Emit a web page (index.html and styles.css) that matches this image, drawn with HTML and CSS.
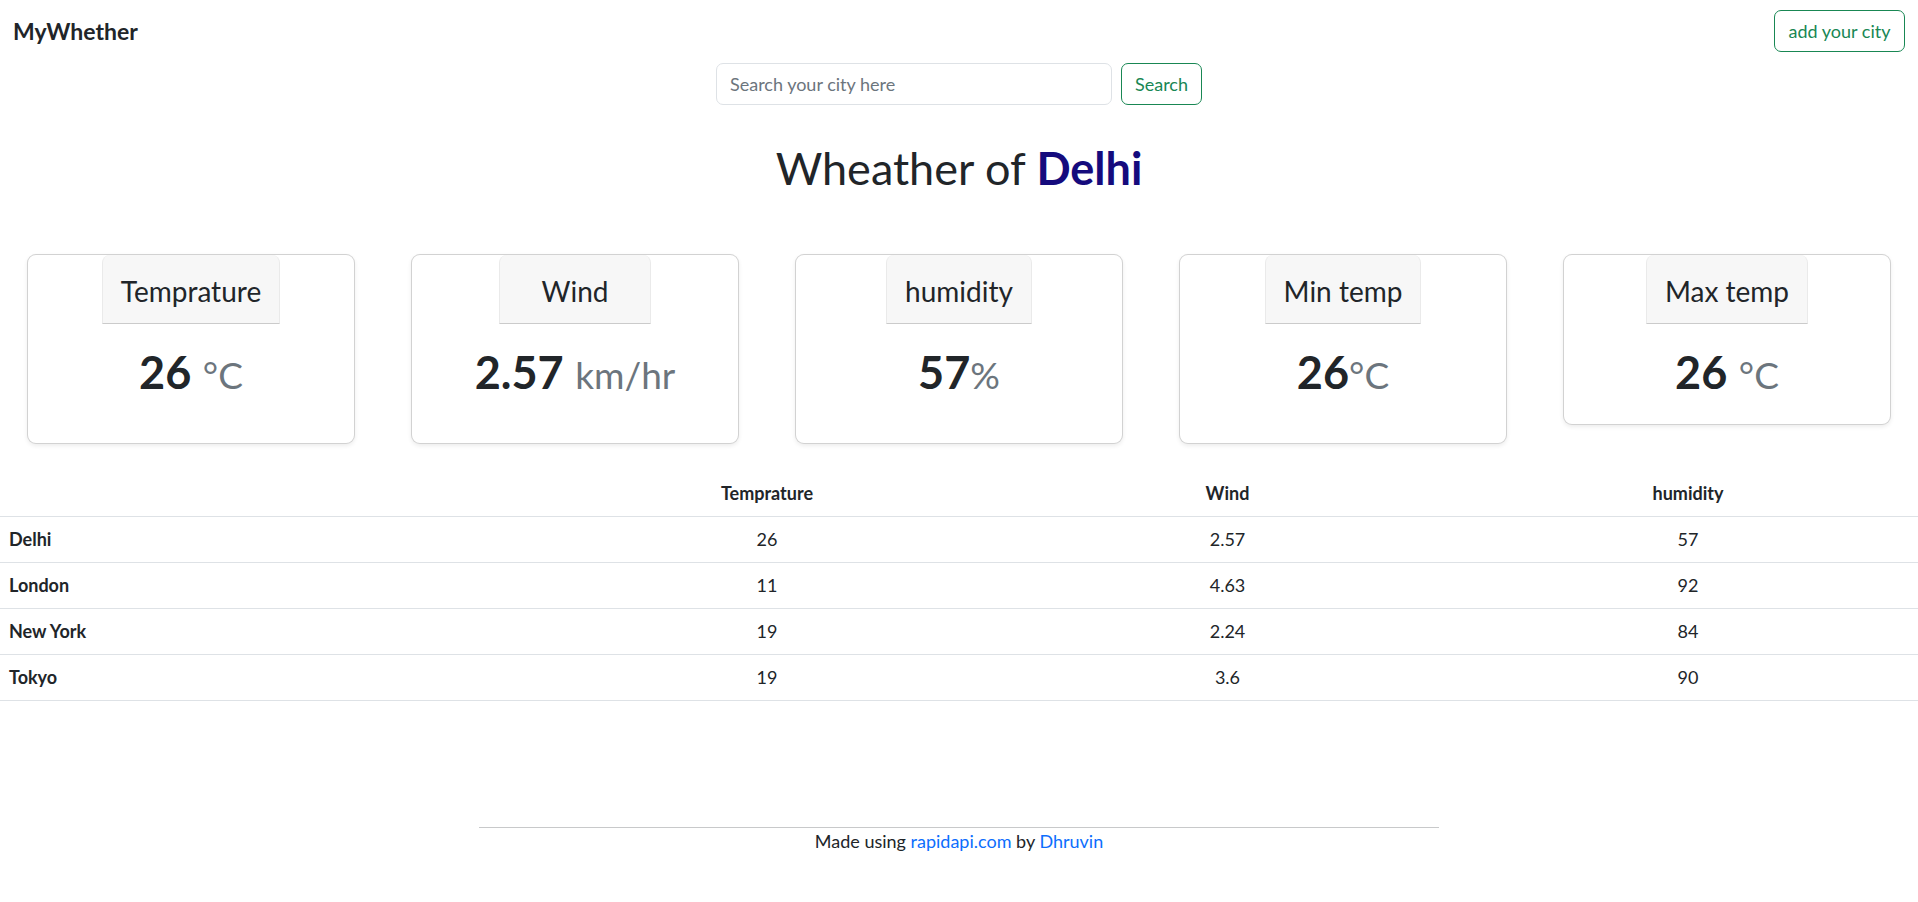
FILE: index.html
```html
<!DOCTYPE html>
<html lang="en">
<head>
<meta charset="utf-8">
<title>MyWhether</title>
<link rel="stylesheet" href="styles.css">
</head>
<body>
<nav class="navbar">
  <a class="brand" href="#">MyWhether</a>
  <button class="btn btn-green" type="button">add your city</button>
</nav>

<form class="search" onsubmit="return false">
  <input class="search-input" type="search" placeholder="Search your city here">
  <button class="btn btn-green" type="submit">Search</button>
</form>

<h1 class="title">Wheather of <span class="city">Delhi</span></h1>

<div class="cards">
  <div class="card card-tall">
    <div class="card-header">Temprature</div>
    <div class="value"><b>26</b> <span class="unit">°C</span></div>
  </div>
  <div class="card card-tall">
    <div class="card-header card-header-wide">Wind</div>
    <div class="value"><b>2.57</b> <span class="unit">km/hr</span></div>
  </div>
  <div class="card card-tall">
    <div class="card-header">humidity</div>
    <div class="value"><b>57</b><span class="unit">%</span></div>
  </div>
  <div class="card card-tall">
    <div class="card-header">Min temp</div>
    <div class="value"><b>26</b><span class="unit">°C</span></div>
  </div>
  <div class="card">
    <div class="card-header">Max temp</div>
    <div class="value"><b>26</b> <span class="unit">°C</span></div>
  </div>
</div>

<table class="table">
  <colgroup>
    <col class="col-city"><col class="col-a"><col class="col-b"><col class="col-c">
  </colgroup>
  <thead>
    <tr><th></th><th>Temprature</th><th>Wind</th><th>humidity</th></tr>
  </thead>
  <tbody>
    <tr><th>Delhi</th><td>26</td><td>2.57</td><td>57</td></tr>
    <tr><th>London</th><td>11</td><td>4.63</td><td>92</td></tr>
    <tr><th>New York</th><td>19</td><td>2.24</td><td>84</td></tr>
    <tr><th>Tokyo</th><td>19</td><td>3.6</td><td>90</td></tr>
  </tbody>
</table>

<footer class="footer">
  <hr class="rule">
  <p class="credit">Made using <a href="#">rapidapi.com</a> by <a href="#">Dhruvin</a></p>
</footer>
</body>
</html>
```
FILE: styles.css
```css
* { box-sizing: border-box; }

body {
  margin: 0;
  font-family: Lato, "Noto Sans", sans-serif;
  font-size: 18px;
  line-height: 27px;
  color: #212529;
  background: #fff;
}

.navbar {
  display: flex;
  align-items: center;
  justify-content: space-between;
  padding: 10px 13px 10px 13px;
}

.brand {
  font-size: 23px;
  font-weight: 700;
  line-height: 29px;
  color: #212529;
  text-decoration: none;
}

.btn {
  font-family: inherit;
  font-size: 18px;
  line-height: 27px;
  padding: 6.5px 13.5px;
  border-radius: 7px;
  background: #fff;
  cursor: pointer;
}

.btn-green {
  color: #198754;
  border: 1px solid #198754;
}

.search {
  display: flex;
  justify-content: center;
  gap: 9px;
  margin-top: 1px;
}

.search-input {
  width: 396px;
  height: 42px;
  padding: 6.5px 13.5px;
  font-family: inherit;
  font-size: 18px;
  color: #212529;
  border: 1px solid #dee2e6;
  border-radius: 7px;
  outline: none;
}

.search-input::placeholder { color: #6c757d; }

.search .btn { height: 42px; }

.title {
  margin: 36px 0 59px;
  text-align: center;
  font-size: 45px;
  line-height: 54px;
  font-weight: 400;
}

.city {
  font-weight: 700;
  color: #150b7d;
}

.cards {
  display: flex;
  justify-content: space-between;
  align-items: flex-start;
  padding: 0 27px;
}

.card {
  width: 328px;
  display: flex;
  flex-direction: column;
  align-items: center;
  border: 1px solid rgba(0, 0, 0, 0.175);
  border-radius: 9px;
  box-shadow: 0 2px 4px rgba(0, 0, 0, 0.075);
  padding-bottom: 25px;
  background: #fff;
}

.card-tall { padding-bottom: 44px; }

.card-header {
  padding: 19px 18px 15px;
  text-align: center;
  font-size: 28px;
  line-height: 34px;
  background: #f7f7f7;
  border: 1px solid rgba(0, 0, 0, 0.05);
  border-top: 0;
  border-bottom: 1px solid rgba(0, 0, 0, 0.175);
  border-radius: 8px 8px 0 0;
}

.card-header-wide { min-width: 152px; }

.value {
  margin-top: 21px;
  font-size: 45px;
  line-height: 54px;
  white-space: nowrap;
}

.value b { font-weight: 700; }

.unit {
  font-size: 37px;
  line-height: 1;
  color: #6c757d;
}

.table {
  width: 100%;
  margin-top: 27px;
  border-collapse: collapse;
  table-layout: fixed;
}

.col-city { width: 537px; }
.col-a { width: 460px; }
.col-b { width: 461px; }
.col-c { width: 460px; }

.table th,
.table td {
  padding: 9px;
  border-bottom: 1px solid #dee2e6;
  text-align: center;
  font-size: 18px;
  line-height: 27px;
}

.table th { font-weight: 700; }

.table tbody th { text-align: left; }

.footer {
  margin-top: 126px;
  text-align: center;
}

.rule {
  width: 960px;
  margin: 0 auto;
  border: 0;
  border-top: 1px solid #c8c9ca;
}

.credit {
  margin: 0;
  line-height: 27px;
}

.credit a {
  color: #0d6efd;
  text-decoration: none;
}
```
